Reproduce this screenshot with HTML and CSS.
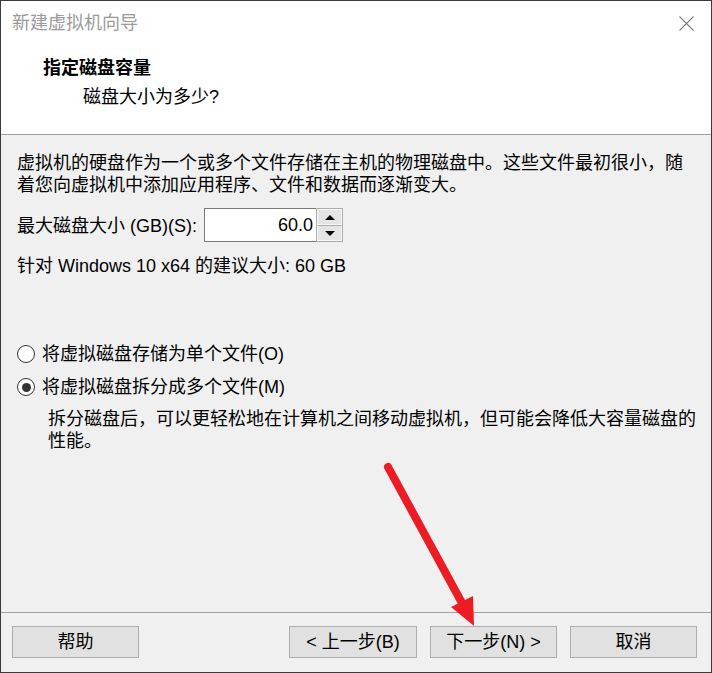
FILE: index.html
```html
<!DOCTYPE html>
<html lang="zh-CN">
<head>
<meta charset="utf-8">
<title>新建虚拟机向导</title>
<link rel="stylesheet" href="styles.css">
</head>
<body>
<div class="window">
  <div class="titlebar">
    <span class="title">新建虚拟机向导</span>
    <svg class="close" width="15" height="15" viewBox="0 0 15 15"><path d="M0.5 0.5 L14.5 14.5 M14.5 0.5 L0.5 14.5" stroke="#808080" stroke-width="1.1" fill="none"/></svg>
  </div>
  <div class="header">
    <div class="heading">指定磁盘容量</div>
    <div class="subheading">磁盘大小为多少?</div>
  </div>
  <div class="content">
    <p class="intro">虚拟机的硬盘作为一个或多个文件存储在主机的物理磁盘中。这些文件最初很小，随着您向虚拟机中添加应用程序、文件和数据而逐渐变大。</p>
    <div class="size-row">
      <span class="label">最大磁盘大小 (GB)(S):</span>
      <div class="spin">
        <div class="spin-field">60.0</div>
        <div class="spin-buttons">
          <div class="spin-btn"><span class="tri-up"></span></div>
          <div class="spin-btn"><span class="tri-down"></span></div>
        </div>
      </div>
    </div>
    <div class="recommend">针对 Windows 10 x64 的建议大小: 60 GB</div>
    <div class="radio-row first">
      <span class="radio"></span>
      <span>将虚拟磁盘存储为单个文件(O)</span>
    </div>
    <div class="radio-row second">
      <span class="radio checked"></span>
      <span>将虚拟磁盘拆分成多个文件(M)</span>
    </div>
    <p class="desc">拆分磁盘后，可以更轻松地在计算机之间移动虚拟机，但可能会降低大容量磁盘的性能。</p>
  </div>
  <div class="footer">
    <div class="btn">帮助</div>
    <div class="btn-group">
      <div class="btn">&lt; 上一步(B)</div>
      <div class="btn">下一步(N) &gt;</div>
      <div class="btn">取消</div>
    </div>
  </div>
  <svg class="arrow" width="712" height="673" viewBox="0 0 712 673">
    <line x1="388" y1="467" x2="462" y2="603" stroke="#ed1c24" stroke-width="8" stroke-linecap="round"/>
    <polygon points="451,607 473,596 474,626" fill="#ed1c24"/>
  </svg>
</div>
</body>
</html>
```

FILE: styles.css
```css
* { box-sizing: border-box; }
html, body { margin: 0; padding: 0; }
body {
  font-family: "Liberation Sans", "Noto Sans CJK SC", sans-serif;
  font-size: 18px;
  line-height: 22px;
  color: #000;
  background: #f0f0f0;
}
.window {
  position: relative;
  width: 712px;
  height: 673px;
  border: 1px solid #3b3b3b;
  background: #f0f0f0;
  display: flex;
  flex-direction: column;
}
.titlebar {
  height: 44px;
  background: #fff;
  display: flex;
  align-items: center;
  justify-content: space-between;
  padding: 0 17px 0 11px;
}
.title {
  color: #9a9a9a;
  font-size: 18px;
}
.close { display: block; }
.header {
  height: 90px;
  background: #fff;
  border-bottom: 1px solid #a0a0a0;
  padding: 12px 0 0 42px;
}
.heading {
  font-weight: bold;
  font-size: 18px;
}
.subheading {
  margin-top: 7px;
  padding-left: 40px;
}
.content {
  flex: 1;
  padding: 17px 8px 0 16px;
}
.intro {
  margin: 0;
  padding-right: 6px;
}
.size-row {
  margin-top: 12px;
  display: flex;
  align-items: center;
  height: 34px;
}
.label { margin-right: 7px; margin-top: 2px; }
.spin {
  display: flex;
  height: 34px;
}
.spin-field {
  width: 112px;
  height: 34px;
  background: #fff;
  border: 1px solid #7a7a7a;
  border-right: none;
  text-align: right;
  padding-right: 3px;
  line-height: 32px;
}
.spin-buttons {
  width: 27px;
  height: 34px;
  border: 1px solid #adadad;
  display: flex;
  flex-direction: column;
}
.spin-btn {
  flex: 1;
  background: #e5e5e5;
  border: 1px solid #f7f7f7;
  display: flex;
  align-items: center;
  justify-content: center;
}
.spin-btn + .spin-btn { border-top: 1px solid #adadad; }
.tri-up {
  width: 0; height: 0;
  border-left: 5px solid transparent;
  border-right: 5px solid transparent;
  border-bottom: 5px solid #000;
}
.tri-down {
  width: 0; height: 0;
  border-left: 5px solid transparent;
  border-right: 5px solid transparent;
  border-top: 5px solid #000;
}
.recommend {
  margin-top: 13px;
}
.radio-row {
  display: flex;
  align-items: center;
  height: 22px;
}
.radio-row.first { margin-top: 66px; }
.radio-row.second { margin-top: 11px; }
.radio {
  width: 18px;
  height: 18px;
  border-radius: 50%;
  border: 1px solid #333;
  background: #fff;
  margin-right: 7px;
  display: flex;
  align-items: center;
  justify-content: center;
  flex: none;
}
.radio.checked::after {
  content: "";
  width: 9px;
  height: 9px;
  border-radius: 50%;
  background: #333;
}
.desc {
  margin: 10px 0 0 31px;
}
.footer {
  height: 60px;
  border-top: 1px solid #a0a0a0;
  display: flex;
  justify-content: space-between;
  align-items: flex-start;
  padding: 13px 14px 0 11px;
}
.btn-group {
  display: flex;
  gap: 13px;
  margin-left: -1px;
}
.btn {
  width: 127px;
  height: 32px;
  background: #e1e1e1;
  border: 1px solid #adadad;
  text-align: center;
  line-height: 30px;
}
.btn-group .btn:first-child { width: 128px; }
.arrow {
  position: absolute;
  left: -1px;
  top: -1px;
  pointer-events: none;
}
```
